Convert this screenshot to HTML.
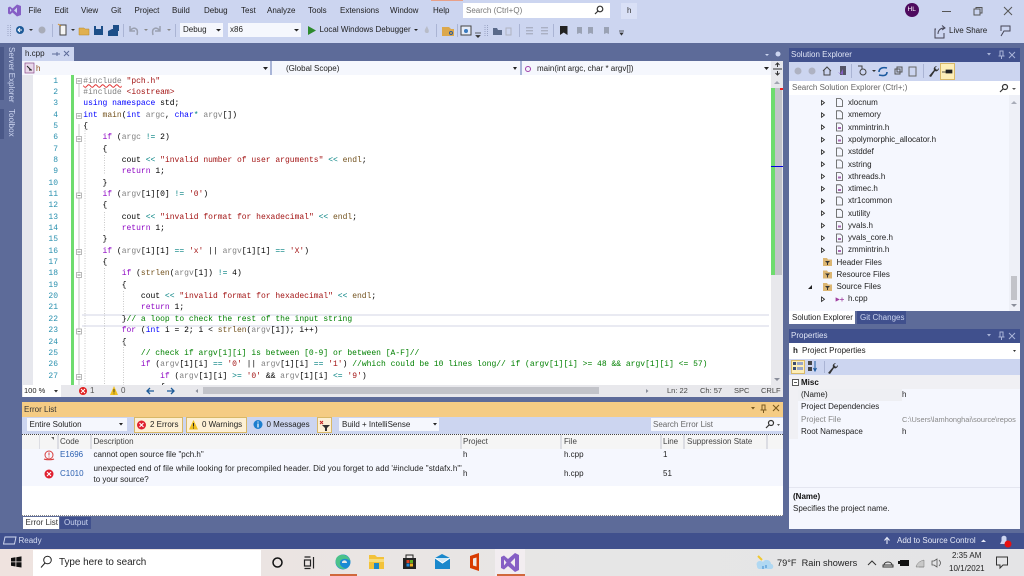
<!DOCTYPE html>
<html><head><meta charset="utf-8"><style>
html,body{margin:0;padding:0;width:1024px;height:576px;overflow:hidden;background:#ccd5f0;font-family:"Liberation Sans",sans-serif;font-size:8px;color:#1e1e1e}
#root{position:absolute;left:0;top:0;width:1024px;height:576px;overflow:hidden;background:#ccd5f0;filter:blur(.3px)}
.b{position:absolute}
.t{position:absolute;white-space:nowrap;line-height:12px;height:12px}
#code{position:absolute;left:83.3px;top:75.6px;font:8px/11.35px "Liberation Mono",monospace;color:#000;white-space:pre;z-index:2}
#nums{position:absolute;left:33px;width:25px;top:75.6px;font:8px/11.35px "Liberation Mono",monospace;color:#2b91af;text-align:right;white-space:pre}
.k{color:#0000ff}.c{color:#8f08c4}.s{color:#a31515}.g{color:#008000}.p{color:#808080}.f{color:#74531f}.o{color:#008080}.d{color:#808080}
.w{color:#ccd5f0}
svg{position:absolute;left:0;top:0;z-index:5}
</style></head><body><div id="root">
<!-- top -->
<div class="b" style="left:431px;top:0;width:32px;height:1px;background:#e8a088"></div>
<div class="t" style="left:28.5px;top:5px">File</div>
<div class="t" style="left:54.5px;top:5px">Edit</div>
<div class="t" style="left:81px;top:5px">View</div>
<div class="t" style="left:111px;top:5px">Git</div>
<div class="t" style="left:134.5px;top:5px">Project</div>
<div class="t" style="left:172px;top:5px">Build</div>
<div class="t" style="left:204px;top:5px">Debug</div>
<div class="t" style="left:241px;top:5px">Test</div>
<div class="t" style="left:267px;top:5px">Analyze</div>
<div class="t" style="left:308px;top:5px">Tools</div>
<div class="t" style="left:340px;top:5px">Extensions</div>
<div class="t" style="left:390px;top:5px">Window</div>
<div class="t" style="left:433px;top:5px">Help</div>
<div class="b" style="left:463px;top:3px;width:147px;height:15px;background:#fff"></div>
<div class="t" style="left:466px;top:5px;color:#777">Search (Ctrl+Q)</div>
<div class="b" style="left:621px;top:3px;width:16px;height:16px;background:#d9e0f6"></div>
<div class="t" style="left:627px;top:5px;color:#333">h</div>
<div class="b" style="left:905px;top:3px;width:14px;height:14px;border-radius:50%;background:#4e0b5e"></div>
<div class="t" style="left:907.5px;top:4px;color:#fff;font-size:6.5px">HL</div>
<div class="b" style="left:180px;top:23px;width:43px;height:14px;background:#f5f7fd"></div>
<div class="t" style="left:183px;top:24px">Debug</div>
<div class="b" style="left:228px;top:23px;width:73px;height:14px;background:#f5f7fd"></div>
<div class="t" style="left:230px;top:24px">x86</div>
<div class="t" style="left:319.5px;top:24px">Local Windows Debugger</div>
<div class="t" style="left:949px;top:25px">Live Share</div>
<!-- bands -->
<div class="b" style="left:0;top:43px;width:1024px;height:490px;background:#5d6b99"></div>
<div class="b" style="left:0;top:47px;width:4px;height:53px;background:#4a5888"></div>
<div class="b" style="left:0;top:109px;width:4px;height:30px;background:#4a5888"></div>
<div class="t" style="left:5px;top:47px;color:#ccd5f0;writing-mode:vertical-rl;height:auto;width:12px">Server Explorer</div>
<div class="t" style="left:5px;top:109px;color:#ccd5f0;writing-mode:vertical-rl;height:auto;width:12px">Toolbox</div>
<div class="b" style="left:22px;top:47px;width:52px;height:14px;background:#ccd5f0"></div>
<div class="t" style="left:25px;top:48px">h.cpp</div>
<!-- nav bar -->
<div class="b" style="left:22px;top:61px;width:761px;height:14px;background:#f5f7fd"></div>
<div class="b" style="left:270px;top:61px;width:2px;height:14px;background:#a9b5d8"></div>
<div class="b" style="left:520px;top:61px;width:2px;height:14px;background:#a9b5d8"></div>
<div class="b" style="left:771px;top:61px;width:12px;height:14px;background:#e6e7ed"></div>
<div class="t" style="left:36px;top:63px;color:#8a4a1a">h</div>
<div class="t" style="left:286px;top:63px">(Global Scope)</div>
<div class="t" style="left:537px;top:63px">main(int argc, char * argv[])</div>
<!-- editor -->
<div class="b" style="left:22px;top:75px;width:761px;height:310px;background:#fff"></div>
<div class="b" style="left:22px;top:75px;width:11px;height:310px;background:#e6e7ed"></div>
<div class="b" style="left:71px;top:75px;width:3px;height:310px;background:#6edc6e"></div>
<div class="b" style="left:82px;top:314px;width:687px;height:9px;border:solid #e9eaf2;border-width:2px 0;"></div>
<div class="b" style="left:771px;top:75px;width:12px;height:310px;background:#e8e8ec"></div>
<div class="b" style="left:771px;top:88px;width:11px;height:187px;background:#c2c3c9"></div>
<div class="b" style="left:771px;top:88px;width:4px;height:187px;background:#6edc6e"></div>
<div class="b" style="left:780px;top:88px;width:3px;height:2px;background:#f02020"></div>
<div class="b" style="left:771px;top:166px;width:12px;height:1px;background:#0000e0"></div>
<div id="nums">1
2
3
4
5
6
7
8
9
10
11
12
13
14
15
16
17
18
19
20
21
22
23
24
25
26
27</div>
<div id="code"><span class="d" style="text-decoration:underline wavy #e03030 .5px">#include</span> <span class="s">"pch.h"</span>
<span class="d">#include</span> <span class="s">&lt;iostream&gt;</span>
<span class="k">using namespace</span> std;
<span class="k">int</span> <span class="f">main</span>(<span class="k">int</span> <span class="p">argc</span>, <span class="k">char</span><span class="o">*</span> <span class="p">argv</span>[])
{
    <span class="c">if</span> (<span class="p">argc</span> <span class="o">!=</span> 2)
    {
        cout <span class="o">&lt;&lt;</span> <span class="s">"invalid number of user arguments"</span> <span class="o">&lt;&lt;</span> <span class="f">endl</span>;
        <span class="c">return</span> 1;
    }
    <span class="c">if</span> (<span class="p">argv</span>[1][0] <span class="o">!=</span> <span class="s">'0'</span>)
    {
        cout <span class="o">&lt;&lt;</span> <span class="s">"invalid format for hexadecimal"</span> <span class="o">&lt;&lt;</span> <span class="f">endl</span>;
        <span class="c">return</span> 1;
    }
    <span class="c">if</span> (<span class="p">argv</span>[1][1] <span class="o">==</span> <span class="s">'x'</span> || <span class="p">argv</span>[1][1] <span class="o">==</span> <span class="s">'X'</span>)
    {
        <span class="c">if</span> (<span class="f">strlen</span>(<span class="p">argv</span>[1]) <span class="o">!=</span> 4)
        {
            cout <span class="o">&lt;&lt;</span> <span class="s">"invalid format for hexadecimal"</span> <span class="o">&lt;&lt;</span> <span class="f">endl</span>;
            <span class="c">return</span> 1;
        }<span class="g">// a loop to check the rest of the input string</span>
        <span class="c">for</span> (<span class="k">int</span> i = 2; i &lt; <span class="f">strlen</span>(<span class="p">argv</span>[1]); i++)
        {
            <span class="g">// check if argv[1][i] is between [0-9] or between [A-F]//</span>
            <span class="c">if</span> (<span class="p">argv</span>[1][i] <span class="o">==</span> <span class="s">'0'</span> || <span class="p">argv</span>[1][i] <span class="o">==</span> <span class="s">'1'</span>) <span class="g">//which could be 10 lines long// if (argv[1][i] &gt;= 48 &amp;&amp; argv[1][i] &lt;= 57)</span>
                <span class="c">if</span> (<span class="p">argv</span>[1][i] <span class="o">&gt;=</span> <span class="s">'0'</span> &amp;&amp; <span class="p">argv</span>[1][i] <span class="o">&lt;=</span> <span class="s">'9'</span>)
                {</div>
<!-- editor bottom -->
<div class="b" style="left:22px;top:385px;width:761px;height:12px;background:#e8e8ec;z-index:3"></div>
<div class="b" style="left:23px;top:385px;width:38px;height:12px;background:#fff;z-index:3"></div>
<div class="t" style="left:24px;top:385px;z-index:4;font-size:7.5px">100 %</div>
<div class="t" style="left:90px;top:385px;z-index:4;color:#555">1</div>
<div class="t" style="left:121px;top:385px;z-index:4;color:#555">0</div>
<div class="b" style="left:203px;top:387px;width:396px;height:7px;background:#c2c3c9;z-index:3"></div>
<div class="t" style="left:667px;top:385px;z-index:4;color:#444;font-size:7.5px">Ln: 22</div>
<div class="t" style="left:700px;top:385px;z-index:4;color:#444;font-size:7.5px">Ch: 57</div>
<div class="t" style="left:734px;top:385px;z-index:4;color:#444;font-size:7.5px">SPC</div>
<div class="t" style="left:761px;top:385px;z-index:4;color:#444;font-size:7.5px">CRLF</div>
<!-- error list -->
<div class="b" style="left:22px;top:402px;width:761px;height:15px;background:#f5cc84"></div>
<div class="t" style="left:24px;top:404px;color:#333">Error List</div>
<div class="b" style="left:22px;top:417px;width:761px;height:17px;background:#ccd5f0"></div>
<div class="b" style="left:27px;top:418px;width:100px;height:13px;background:#f5f7fd"></div>
<div class="t" style="left:29.5px;top:419px">Entire Solution</div>
<div class="b" style="left:134px;top:417px;width:47px;height:14px;background:#fdf0d5;border:1px solid #d8b868;box-sizing:content-box"></div>
<div class="t" style="left:150px;top:419px">2 Errors</div>
<div class="b" style="left:186px;top:417px;width:59px;height:14px;background:#fdf0d5;border:1px solid #d8b868"></div>
<div class="t" style="left:202px;top:419px">0 Warnings</div>
<div class="t" style="left:266.5px;top:419px">0 Messages</div>
<div class="b" style="left:317px;top:417px;width:13px;height:14px;background:#fdf0d5;border:1px solid #d8b868"></div>
<div class="b" style="left:339px;top:418px;width:100px;height:13px;background:#f5f7fd"></div>
<div class="t" style="left:342px;top:419px">Build + IntelliSense</div>
<div class="b" style="left:651px;top:418px;width:132px;height:13px;background:#f5f7fd"></div>
<div class="t" style="left:653px;top:419px;color:#666">Search Error List</div>
<div class="b" style="left:22px;top:434px;width:761px;height:82px;background:#fff"></div>
<div class="b" style="left:22px;top:434px;width:761px;height:15px;background:#f5f5f5"></div>
<div class="b" style="left:22px;top:449px;width:761px;height:37px;background:#f5f7fe"></div>
<div class="b" style="left:22px;top:434px;width:761px;height:1px;border-top:1px dotted #444;box-sizing:border-box"></div>
<div class="b" style="left:22px;top:515px;width:761px;height:1px;border-top:1px dotted #888;box-sizing:border-box"></div>
<div class="b" style="left:39px;top:435px;width:1px;height:14px;background:#dcdde3"></div>
<div class="b" style="left:57px;top:435px;width:2px;height:14px;background:#dcdde3"></div>
<div class="b" style="left:90px;top:435px;width:2px;height:14px;background:#dcdde3"></div>
<div class="b" style="left:460px;top:435px;width:2px;height:14px;background:#dcdde3"></div>
<div class="b" style="left:560px;top:435px;width:2px;height:14px;background:#dcdde3"></div>
<div class="b" style="left:660px;top:435px;width:2px;height:14px;background:#dcdde3"></div>
<div class="b" style="left:683px;top:435px;width:2px;height:14px;background:#dcdde3"></div>
<div class="b" style="left:766px;top:435px;width:2px;height:14px;background:#dcdde3"></div>
<div class="t" style="left:60px;top:436px;color:#444">Code</div>
<div class="t" style="left:93.5px;top:436px;color:#444">Description</div>
<div class="t" style="left:463px;top:436px;color:#444">Project</div>
<div class="t" style="left:564px;top:436px;color:#444">File</div>
<div class="t" style="left:663px;top:436px;color:#444">Line</div>
<div class="t" style="left:687px;top:436px;color:#444">Suppression State</div>
<div class="t" style="left:60px;top:449px;color:#2a5fb0">E1696</div>
<div class="t" style="left:93.5px;top:449px">cannot open source file "pch.h"</div>
<div class="t" style="left:463px;top:449px">h</div>
<div class="t" style="left:564px;top:449px">h.cpp</div>
<div class="t" style="left:663px;top:449px">1</div>
<div class="t" style="left:60px;top:468px;color:#2a5fb0">C1010</div>
<div class="t" style="left:93.5px;top:463px;letter-spacing:.08px">unexpected end of file while looking for precompiled header. Did you forget to add '#include "stdafx.h"'</div>
<div class="t" style="left:93.5px;top:473.5px">to your source?</div>
<div class="t" style="left:463px;top:468px">h</div>
<div class="t" style="left:564px;top:468px">h.cpp</div>
<div class="t" style="left:663px;top:468px">51</div>
<div class="b" style="left:23px;top:517px;width:36px;height:12px;background:#fff"></div>
<div class="t" style="left:25.5px;top:517px;color:#333">Error List</div>
<div class="b" style="left:60px;top:517px;width:31px;height:12px;background:#40508d"></div>
<div class="t" style="left:64px;top:517px;color:#ccd5f0">Output</div>
<!-- solution explorer -->
<div class="b" style="left:789px;top:48px;width:231px;height:14px;background:#40508d"></div>
<div class="t" style="left:791px;top:49px;color:#e0e5f5">Solution Explorer</div>
<div class="b" style="left:789px;top:62px;width:231px;height:19px;background:#ccd5f0"></div>
<div class="b" style="left:940px;top:63px;width:13px;height:15px;background:#fdeeb8;border:1px solid #d8b868"></div>
<div class="b" style="left:789px;top:81px;width:231px;height:14px;background:#fff"></div>
<div class="t" style="left:792px;top:82px;color:#666">Search Solution Explorer (Ctrl+;)</div>
<div class="b" style="left:789px;top:95px;width:231px;height:216px;background:#f5f7fe"></div>
<div class="b" style="left:1009px;top:95px;width:11px;height:216px;background:#eef0f7"></div>
<div class="b" style="left:1011px;top:276px;width:6px;height:24px;background:#c2c3c9"></div>
<div class="t" style="left:848px;top:97px">xlocnum</div>
<div class="t" style="left:848px;top:109px">xmemory</div>
<div class="t" style="left:848px;top:121.5px">xmmintrin.h</div>
<div class="t" style="left:848px;top:134px">xpolymorphic_allocator.h</div>
<div class="t" style="left:848px;top:146px">xstddef</div>
<div class="t" style="left:848px;top:158.5px">xstring</div>
<div class="t" style="left:848px;top:170.5px">xthreads.h</div>
<div class="t" style="left:848px;top:183px">xtimec.h</div>
<div class="t" style="left:848px;top:195px">xtr1common</div>
<div class="t" style="left:848px;top:207.5px">xutility</div>
<div class="t" style="left:848px;top:219.5px">yvals.h</div>
<div class="t" style="left:848px;top:232px">yvals_core.h</div>
<div class="t" style="left:848px;top:244px">zmmintrin.h</div>
<div class="t" style="left:836.5px;top:256.5px">Header Files</div>
<div class="t" style="left:836.5px;top:268.5px">Resource Files</div>
<div class="t" style="left:836.5px;top:281px">Source Files</div>
<div class="t" style="left:848px;top:293px">h.cpp</div>
<div class="b" style="left:789px;top:311px;width:66px;height:13px;background:#fff"></div>
<div class="t" style="left:792px;top:312px;color:#222">Solution Explorer</div>
<div class="b" style="left:857px;top:311px;width:49px;height:13px;background:#40508d"></div>
<div class="t" style="left:860px;top:312px;color:#ccd5f0">Git Changes</div>
<!-- properties -->
<div class="b" style="left:789px;top:329px;width:231px;height:14px;background:#40508d"></div>
<div class="t" style="left:791px;top:330px;color:#e0e5f5">Properties</div>
<div class="b" style="left:789px;top:343px;width:231px;height:16px;background:#fff"></div>
<div class="t" style="left:793px;top:345px;font-weight:bold">h</div>
<div class="t" style="left:802px;top:345px">Project Properties</div>
<div class="b" style="left:789px;top:359px;width:231px;height:16px;background:#ccd5f0"></div>
<div class="b" style="left:791px;top:360px;width:14px;height:14px;background:#fdeeb8;border:1px solid #d8b868;box-sizing:border-box"></div>
<div class="b" style="left:789px;top:375px;width:231px;height:154px;background:#f5f7fe"></div>
<div class="b" style="left:789px;top:375px;width:231px;height:14px;background:#f0f0f4"></div>
<div class="b" style="left:789px;top:389px;width:113px;height:12px;background:#eeeff3"></div>
<div class="b" style="left:789px;top:389px;width:9px;height:50px;background:#f0f0f4"></div>
<div class="t" style="left:801px;top:377px;font-weight:bold;color:#111">Misc</div>
<div class="t" style="left:801px;top:389px">(Name)</div>
<div class="t" style="left:902px;top:389px">h</div>
<div class="t" style="left:801px;top:401px">Project Dependencies</div>
<div class="t" style="left:801px;top:413.5px;color:#888">Project File</div>
<div class="t" style="left:902px;top:413.5px;color:#888;width:117px;overflow:hidden;font-size:7.4px">C:\Users\lamhonghai\source\repos</div>
<div class="t" style="left:801px;top:426px">Root Namespace</div>
<div class="t" style="left:902px;top:426px">h</div>
<div class="b" style="left:789px;top:487px;width:231px;height:1px;background:#e4e6f0"></div>
<div class="t" style="left:793px;top:491px;font-weight:bold;color:#111">(Name)</div>
<div class="t" style="left:793px;top:503px">Specifies the project name.</div>
<!-- status bar -->
<div class="b" style="left:0;top:533px;width:1024px;height:16px;background:#40508d"></div>
<div class="t" style="left:18.5px;top:535px;color:#d5dcf2">Ready</div>
<div class="t" style="left:897px;top:535px;color:#e5e9f7">Add to Source Control</div>
<!-- taskbar -->
<div class="b" style="left:0;top:549px;width:1024px;height:27px;background:linear-gradient(90deg,#efe3df,#e6e6e6 60%,#e4e4e6)"></div>
<div class="b" style="left:33px;top:550px;width:228px;height:26px;background:#fff"></div>
<div class="t" style="left:59px;top:556px;font-size:9.9px;line-height:14px;height:14px;color:#222">Type here to search</div>
<div class="b" style="left:495px;top:549px;width:30px;height:27px;background:#f2edf0"></div>
<div class="b" style="left:330px;top:574px;width:27px;height:2px;background:#d0683c"></div>
<div class="b" style="left:497px;top:574px;width:28px;height:2px;background:#d0683c"></div>
<div class="t" style="left:777px;top:556px;font-size:9.2px;line-height:14px;height:14px;color:#222">79°F&nbsp; Rain showers</div>
<div class="t" style="left:952px;top:550px;color:#222">2:35 AM</div>
<div class="t" style="left:949px;top:563px;color:#222">10/1/2021</div>

<svg width="1024" height="576" viewBox="0 0 1024 576">
<!-- VS logo -->
<path fill="#865fc5" fill-rule="evenodd" d="M8 7.5L10 6.5L12.5 8.5L17 4.5L21 6V15L17 16.5L12.5 12.5L10 14.5L8 13.5ZM17 7.5L14 10.5L17 13ZM10 8.5V12L11.5 10.3Z"/>
<!-- search magnifier -->
<g fill="none" stroke="#333" stroke-width="1.2"><circle cx="600" cy="9" r="2.8"/><path d="M598 11L595 14"/></g>
<!-- window controls -->
<g fill="none" stroke="#555"><path d="M942 11.5H951"/><rect x="974" y="9" width="6" height="6"/><path d="M976 9V7.5H982V13H980"/><path d="M1004 7L1012 15M1012 7L1004 15"/></g>
<!-- toolbar grippers and separators -->
<path d="M8 25V36M10.500 25V36" stroke="#9aa4c4" stroke-dasharray="1 1" fill="none"/>
<path d="M485 25V36M487.500 25V36" stroke="#9aa4c4" stroke-dasharray="1 1" fill="none"/>
<path d="M52.500 24V37M123.500 24V37M175.500 24V37M436.500 24V37M457.500 24V37M519.500 24V37M553.500 24V37" stroke="#aab4d4" fill="none"/>
<!-- toolbar -->
<circle cx="20" cy="30" r="4" fill="#1c5a98"/><path d="M18 30H22M20 28L18 30L20 32" stroke="#fff" fill="none"/>
<path d="M29 29H33L31 31Z" fill="#333"/><circle cx="42" cy="30" r="3.5" fill="#a8acb8"/>
<path d="M60 25H66V35H60Z" fill="#f5f5f5" stroke="#444"/><path d="M58 24L61 26" stroke="#d89020"/><path d="M71 29H75L73 31Z" fill="#333"/>
<path d="M79 28H84L85 29H89V35H79Z" fill="#e0b050" stroke="#b88828" stroke-width=".5"/>
<path d="M94 26H103V35H94Z" fill="#1c4e88"/><rect x="96" y="26" width="5" height="3" fill="#ccd5f0"/>
<path d="M112 29H118V36H108V31Z" fill="#1c4e88"/><path d="M113 25H119V31H113Z" fill="#1c4e88"/>
<path d="M130 26V31H135M130.500 30.500C133 26.500 139 27.500 137 35" fill="none" stroke="#9aa0b0" stroke-width="1.500"/><path d="M144 29H148L146 31Z" fill="#888"/>
<path d="M160 26V31H155M159.500 30.500C157 26.500 151 27.500 153 35" fill="none" stroke="#9aa0b0" stroke-width="1.500"/><path d="M167 29H171L169 31Z" fill="#888"/>
<path d="M216 29H221L218.5 31.5Z" fill="#222"/><path d="M294 29H299L296.5 31.5Z" fill="#222"/>
<path d="M308 26L316 30.5L308 35Z" fill="#2d8a2d"/>
<path d="M414 29H418L416 31Z" fill="#222"/><path d="M426 33C423 31 426 28 427 26C428 29 430 31 428 33Z" fill="#b8bcc8"/>
<path d="M442 27H449L451 29H454V36H442Z" fill="#dca84c"/><circle cx="451" cy="33" r="1.5" fill="none" stroke="#2a5a9a"/>
<rect x="461" y="26" width="10" height="9" fill="#e6ecf8" stroke="#444"/><circle cx="466" cy="31" r="2" fill="#3a7abf"/>
<path d="M475 33H481M476 35.5L478 37.5L480 35.5Z" stroke="#333" fill="#333" stroke-width=".7"/>
<path d="M493 28H497L498 30H502V35H493Z" fill="#5a6a8a"/>
<path d="M506 28H511V35H506Z" fill="none" stroke="#b0b4c0"/>
<g fill="#aab0c4"><rect x="526" y="27" width="7" height="1.4"/><rect x="526" y="30" width="7" height="1.4"/><rect x="526" y="33" width="7" height="1.4"/><rect x="541" y="27" width="7" height="1.4"/><rect x="541" y="30" width="7" height="1.4"/><rect x="541" y="33" width="7" height="1.4"/></g>
<path d="M560 26H567.5V35L563.7 32.5L560 35Z" fill="#222"/>
<g fill="#9aa2b4"><path d="M577 27H582V34L579.5 33L577 34Z"/><path d="M588 27H593V34L590.5 33L588 34Z"/><path d="M604 27H609V34L606.5 33L604 34Z"/></g>
<path d="M619 31H624M620 33H623L621.5 35Z" stroke="#333" stroke-width=".7" fill="#333"/>
<g fill="none" stroke="#445"><path d="M936 29H935V38H944V33"/><path d="M938 34C938 30 941 28 944 28M942 25.5L945 28L942 30"/></g>
<path d="M1001 36L1004 31H1010V26H1001V31" fill="none" stroke="#445"/>
<!-- tab -->
<path d="M52 54H57M57 52V56M57 54H60" stroke="#5d6b99" fill="none"/><path d="M64 51L69 56M69 51L64 56" stroke="#5d6b99" fill="none"/>
<path d="M765 54H769L767 56Z" fill="#ccd5f0"/><circle cx="778" cy="54" r="2.5" fill="#ccd5f0"/>
<!-- nav icons -->
<rect x="25" y="63" width="9" height="10" fill="#e8d8ea" stroke="#8a4a8a" stroke-width=".7"/><path d="M27 66L31 70M29 70H32" stroke="#222" stroke-width="1"/>
<path d="M263 67H268L265.5 70Z" fill="#222"/><path d="M513 67H517L515 70Z" fill="#222"/><path d="M764 67H769L766.5 70Z" fill="#222"/>
<circle cx="528" cy="69" r="2.5" fill="none" stroke="#a040a8" stroke-width="1"/>
<path d="M773 69H782M777.5 63V67M775.5 65L777.5 63L779.5 65M777.5 75V71M775.5 73L777.5 75L779.5 73" stroke="#333" fill="none"/>
<path d="M774 84L777 81L780 84Z" fill="#a0a4b0"/><path d="M774 378L777 381L780 378Z" fill="#8a8e9a"/>
<!-- outline margin -->
<g stroke="#c8c8c8" fill="none">
<path d="M79 84V97M79 124V385"/>
<g fill="#fff" stroke="#a8a8a8" stroke-width=".8">
<rect x="76.5" y="78.5" width="5" height="5"/><rect x="76.5" y="113.5" width="5" height="5"/><rect x="76.5" y="136.5" width="5" height="5"/><rect x="76.5" y="193" width="5" height="5"/><rect x="76.5" y="249.5" width="5" height="5"/><rect x="76.5" y="272.5" width="5" height="5"/><rect x="76.5" y="329" width="5" height="5"/><rect x="76.5" y="374.5" width="5" height="5"/>
</g>
<path d="M77.5 81H80.5M77.5 116H80.5M77.5 139H80.5M77.5 195.5H80.5M77.5 252H80.5M77.5 275H80.5M77.5 331.5H80.5M77.5 377H80.5" stroke="#666" stroke-width=".8"/>
</g>
<g stroke="#c8c8c8" stroke-dasharray="1 1.5" fill="none"><path d="M85 128V385M104.500 155V175M104.500 212V232M104.500 268V385M123.500 291V313M123.500 342V385"/></g>
<!-- editor status -->
<path d="M54 390H58L56 392.500Z" fill="#333"/>
<circle cx="83" cy="391" r="4" fill="#e02020"/><path d="M81 389L85 393M85 389L81 393" stroke="#fff"/>
<path d="M114 386L118 395H110Z" fill="#f0c020"/><path d="M114 389V392.500M114 393.500V394.300" stroke="#222" stroke-width=".8"/>
<path d="M147 391H154M150 388L147 391L150 394" stroke="#1c5a98" stroke-width="1.300" fill="none"/><path d="M174 391H167M171 388L174 391L171 394" stroke="#1c5a98" stroke-width="1.300" fill="none"/>
<path d="M198 389V393L195.500 391Z" fill="#8a8e9a"/><path d="M646 389V393L648.500 391Z" fill="#8a8e9a"/>
<!-- error list -->
<path d="M751 407H755L753 409.500Z" fill="#7a5a20"/><path d="M762 405H765V410H762ZM760.500 410H766.500M763.500 410V413" stroke="#7a5a20" fill="none"/><path d="M773 405L779 411M779 405L773 411" stroke="#7a5a20" stroke-width="1.100"/>
<path d="M119 423H123L121 425.500Z" fill="#222"/><path d="M433 423H437L435 425.500Z" fill="#222"/>
<circle cx="141.500" cy="425" r="4.500" fill="#e02030"/><path d="M139.500 423L143.500 427M143.500 423L139.500 427" stroke="#fff" stroke-width="1.100"/>
<path d="M193.500 420L198 429.500H189Z" fill="#f0c020"/><path d="M193.500 423V426.500M193.500 427.500V428.500" stroke="#222"/>
<circle cx="258" cy="424.500" r="4.500" fill="#1c7ecf"/><path d="M258 423.500V427.500M258 421.500V422.500" stroke="#fff" stroke-width="1.200"/>
<path d="M320 421L323 424M323 421L320 424" stroke="#c02020"/><path d="M322 425H330L327 428V431H325V428Z" fill="#333"/>
<g fill="none" stroke="#333" stroke-width="1.200"><circle cx="771" cy="423" r="2.500"/><path d="M769 425L766 428"/></g><path d="M777 424H780L778.500 426Z" fill="#555"/>
<circle cx="49" cy="455" r="4" fill="none" stroke="#d84040"/><path d="M49 452.500V455.500M49 456.500V457.500" stroke="#d84040"/><path d="M44 459C46 460 52 460 54 459" stroke="#d84040" fill="none"/>
<circle cx="49" cy="474" r="4.500" fill="#e02030"/><path d="M47 472L51 476M51 472L47 476" stroke="#fff" stroke-width="1.100"/>
<path d="M51 437L54 437V440Z" fill="#666"/>
<!-- SE title -->
<g fill="#aab4d8"><path d="M987 53H991L989 55.500Z"/><path d="M987 334H991L989 336.500Z"/></g>
<g stroke="#aab4d8" fill="none"><path d="M1000 51H1003V56H1000ZM998.500 56H1004.500M1001.500 56V59"/><path d="M1009 52L1015 58M1015 52L1009 58"/><path d="M1000 332H1003V337H1000ZM998.500 337H1004.500M1001.500 337V340"/><path d="M1009 333L1015 339M1015 333L1009 339"/></g>
<!-- SE toolbar -->
<path d="M851.500 64V78M923.500 64V78M823.500 0" stroke="#aab4d4" fill="none"/>
<circle cx="798" cy="71" r="3.500" fill="#aeb2c2"/><circle cx="812" cy="71" r="3.500" fill="#aeb2c2"/>
<path d="M823 71L827 67L831 71M824 70V75H830V70" fill="none" stroke="#444"/>
<rect x="840" y="66" width="6" height="9" fill="#556"/><path d="M837 71L840 74L843 69V75L838 72Z" fill="#865fc5"/>
<circle cx="863" cy="72" r="3" fill="none" stroke="#444"/><path d="M858 66H862V69" fill="none" stroke="#444"/><path d="M872 70H876L874 72Z" fill="#333"/>
<path d="M879 72C879 68 883 67 887 68M887 72C887 76 883 76 879 75" fill="none" stroke="#1c5a9f" stroke-width="1.600"/>
<rect x="895" y="69" width="5" height="5" fill="none" stroke="#555"/><rect x="897" y="67" width="5" height="5" fill="none" stroke="#555"/>
<rect x="909" y="67" width="7" height="9" fill="none" stroke="#666"/>
<path d="M929 76L934 70C933 68 935 66 937 66L935 68L937 70L939 68C939 71 936 72 935 71L931 77Z" fill="#333"/>
<path d="M942 72H950M946 70H952V73H946Z" fill="#222" stroke="#222" stroke-width=".7"/>
<g fill="none" stroke="#333" stroke-width="1.200"><circle cx="1005" cy="87" r="2.500"/><path d="M1003 89L1000 92"/></g><path d="M1012 88H1016L1014 90Z" fill="#555"/>
<path d="M1011 104L1014 101L1017 104Z" fill="#a8acb8"/><path d="M1011 304L1014 307L1017 304Z" fill="#8a8e9a"/>
<g fill="none" stroke="#555" stroke-width=".8">
<path d="M836.500 98.500H840.500L842.500 100.500V106.500H836.500Z"/><path d="M836.500 110.800H840.500L842.500 112.800V118.800H836.500Z"/><path d="M836.500 123H840.500L842.500 125V131H836.500Z"/><path d="M836.500 135.500H840.500L842.500 137.500V143.500H836.500Z"/><path d="M836.500 148H840.500L842.500 150V156H836.500Z"/><path d="M836.500 160H840.500L842.500 162V168H836.500Z"/><path d="M836.500 172.500H840.500L842.500 174.500V180.500H836.500Z"/><path d="M836.500 184.800H840.500L842.500 186.800V192.800H836.500Z"/><path d="M836.500 197H840.500L842.500 199V205H836.500Z"/><path d="M836.500 209.300H840.500L842.500 211.300V217.300H836.500Z"/><path d="M836.500 221.500H840.500L842.500 223.500V229.500H836.500Z"/><path d="M836.500 234H840.500L842.500 236V242H836.500Z"/><path d="M836.500 246H840.500L842.500 248V254H836.500Z"/>
</g>
<g fill="#a868b0"><rect x="838" y="127" width="3" height="2"/><rect x="838" y="139.500" width="3" height="2"/><rect x="838" y="176.500" width="3" height="2"/><rect x="838" y="189" width="3" height="2"/><rect x="838" y="225.500" width="3" height="2"/><rect x="838" y="238" width="3" height="2"/><rect x="838" y="250" width="3" height="2"/></g>
<g fill="#fff" stroke="#222" stroke-width=".8">
<path d="M821.500 100.500L824.500 102.700L821.500 105Z"/><path d="M821.500 112.800L824.500 115L821.500 117.300Z"/><path d="M821.500 125L824.500 127.300L821.500 129.500Z"/><path d="M821.500 137.500L824.500 139.700L821.500 142Z"/><path d="M821.500 149.800L824.500 152L821.500 154.300Z"/><path d="M821.500 162L824.500 164.200L821.500 166.500Z"/><path d="M821.500 174.200L824.500 176.400L821.500 178.700Z"/><path d="M821.500 186.500L824.500 188.700L821.500 191Z"/><path d="M821.500 198.800L824.500 201L821.500 203.300Z"/><path d="M821.500 211L824.500 213.200L821.500 215.500Z"/><path d="M821.500 223.300L824.500 225.500L821.500 227.800Z"/><path d="M821.500 235.800L824.500 238L821.500 240.300Z"/><path d="M821.500 248L824.500 250.200L821.500 252.500Z"/><path d="M821.500 297L824.500 299.200L821.500 301.500Z"/>
</g>
<path d="M812 289L812 285L808 289Z" fill="#222"/>
<g fill="#dcb672"><path d="M823 258H827L828 259.500H832V266H823Z"/><path d="M823 270.500H827L828 272H832V278.500H823Z"/><path d="M823 283H827L828 284.500H832V291H823Z"/></g>
<g fill="#333"><path d="M825 261H830L828 263V265H827V263Z"/><path d="M825 273.500H830L828 275.500V277.500H827V275.500Z"/><path d="M825 286H830L828 288V290H827V288Z"/></g>
<path d="M836 298L839 299.500L836 301ZM840 299.500H844M842 297.500V301.500" stroke="#a040a0" fill="#a040a0" stroke-width=".8"/>
<!-- properties -->
<path d="M1013 350H1016L1014.500 352Z" fill="#333"/>
<g fill="#3a4a70"><rect x="793" y="362" width="3" height="3"/><rect x="793" y="367" width="3" height="3"/></g><g fill="#9aa6c8"><rect x="797" y="362" width="6" height="3"/><rect x="797" y="367" width="6" height="3"/></g>
<g fill="#444"><rect x="808" y="361" width="4" height="4"/><rect x="808" y="367" width="4" height="4"/></g><path d="M815 361V370M813.500 368L815 371L816.500 368" stroke="#1c5a9f" fill="none"/>
<path d="M824.500 361V373" stroke="#aab4d4" fill="none"/>
<path d="M828 373L833 367C832 365 834 363 836 363L834 365L836 367L838 365C838 368 835 369 834 368L830 374Z" fill="#333"/>
<rect x="792.500" y="379.500" width="6" height="6" fill="#fff" stroke="#333" stroke-width=".8"/><path d="M794 382.500H797" stroke="#333" stroke-width=".8"/>
<!-- status bar -->
<path d="M5 537H16L14.500 544H3.500Z" fill="none" stroke="#d5dcf2" stroke-width=".9"/>
<path d="M887 544V538M884.500 540.500L887 537.500L889.500 540.500" stroke="#e5e9f7" fill="none" stroke-width="1.100"/>
<path d="M981 542L983.500 539.500L986 542Z" fill="#e5e9f7"/>
<path d="M1000 544H1008L1006.500 541V538C1006.500 535 1001.500 535 1001.500 538V541Z" fill="#ccd5f0"/><circle cx="1008" cy="544" r="3.500" fill="#e81010"/>
<!-- taskbar -->
<g fill="#111"><path d="M11 558L15.500 557.300V561.500H11Z"/><path d="M16.300 557.200L21.500 556.400V561.500H16.300Z"/><path d="M11 562.300H15.500V566.500L11 565.800Z"/><path d="M16.300 562.300H21.500V567.500L16.300 566.700Z"/></g>
<g fill="none" stroke="#222" stroke-width="1"><circle cx="47.500" cy="560" r="3.800"/><path d="M45 563L41 567.500"/></g>
<circle cx="277.500" cy="562.500" r="4.500" fill="none" stroke="#111" stroke-width="1.500"/>
<g fill="none" stroke="#222" stroke-width="1.200"><rect x="304.500" y="560" width="6" height="6"/><path d="M304.500 557H310.500M304.500 568.500H310.500M313.500 557V568.500"/></g>
<circle cx="343" cy="562" r="7.500" fill="#1b8ad4"/><path d="M336 559C338 553 348 553 350.500 561C347 558 341 558 340 562C339 565 343 569 347 568C341 571 334 566 336 559Z" fill="#4cc28a"/><path d="M342 562C343 559.500 347 560 347 563H342Z" fill="#e6e6e6"/>
<path d="M369 555H375L377 557H384V569H369Z" fill="#f3c23a"/><rect x="369" y="559" width="15" height="3" fill="#f8dc7a"/><rect x="374" y="563" width="5" height="6" fill="#2088c8"/>
<path d="M403 558H416V569H403Z" fill="#222"/><path d="M406 558V555H413V558" fill="none" stroke="#222"/><rect x="406.500" y="560" width="3" height="3" fill="#e04020"/><rect x="410" y="560" width="3" height="3" fill="#60b020"/><rect x="406.500" y="563.500" width="3" height="3" fill="#2088d8"/><rect x="410" y="563.500" width="3" height="3" fill="#f0b020"/>
<path d="M435 558L442 554L450 558V569H435Z" fill="#1a88cc"/><path d="M435 558L442.500 563L450 558" fill="#cfe8f6" stroke="#fff"/>
<path d="M470 556L479 553V571L470 568Z" fill="#d83b01"/><path d="M473 558.500L476.500 557.500V566.500L473 565.500Z" fill="#efe8e6"/>
<path fill="#865fc5" fill-rule="evenodd" d="M501 557L504 555.500L508 559L515 553L519 555V570L515 572L508 566L504 569.500L501 568ZM515 558L510.500 562.500L515 567ZM504 559.500V565.500L506.500 562.500Z"/>
<path d="M757 566C755 561 761 560 763 562C765 558 771 560 771 564C774 564 774 569 771 569H760C758 569 757 568 757 566Z" fill="#b0d8f2"/><path d="M758 556L762 560" stroke="#f0c830" stroke-width="2"/><path d="M763 566V569M766 565V568" stroke="#3a8ad0"/>
<path d="M868 565L872 561L876 565" fill="none" stroke="#333"/>
<path d="M884 565C884 561 892 561 892 565ZM883 565H893V567H883Z" fill="none" stroke="#333"/>
<rect x="900" y="560" width="9" height="6" fill="#111"/><rect x="898" y="561" width="2" height="3" fill="#111"/>
<path d="M916 567C917 563 920 561 924 560V567ZM919 567H924" fill="#c8c8c8" stroke="#777" stroke-width=".5"/>
<path d="M932 561H934L937 559V567L934 565H932ZM939 560C941 562 941 564 939 566" fill="none" stroke="#555" stroke-width=".8"/>
<path d="M996.500 557H1007.500V565H1003L1000 568V565H996.500Z" fill="none" stroke="#333"/>
</svg>
</div></body></html>
